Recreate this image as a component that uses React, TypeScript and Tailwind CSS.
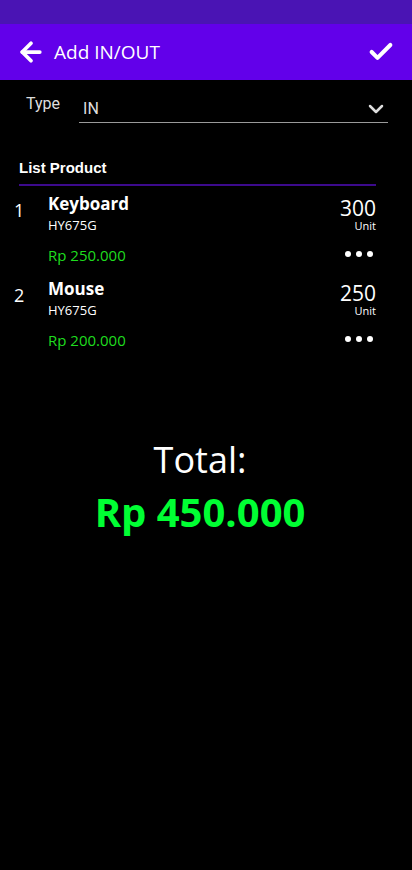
import { ArrowLeft, Check, ChevronDown } from "lucide-react";

const products = [
  { id: 1, name: "Keyboard", code: "HY675G", price: "Rp 250.000", qty: 300 },
  { id: 2, name: "Mouse", code: "HY675G", price: "Rp 200.000", qty: 250 },
];

export default function App() {
  return (
    <div className="w-[412px] h-[870px] bg-black text-white font-['Open_Sans',sans-serif]">
      <div className="h-[24px] bg-[#4a14b4]" />
      <div className="h-[56px] bg-[#6200ea] flex items-center pl-[16px] pr-[17px]">
        <ArrowLeft size={30} strokeWidth={3} />
        <span className="ml-[8px] text-[19px]">Add IN/OUT</span>
        <Check size={28} strokeWidth={3.5} className="ml-auto" />
      </div>

      <div className="flex items-end pl-[26px] pr-[24px] pt-[12px]">
        <span className="text-[16px] text-[#dddddd] font-['Roboto',sans-serif] mb-[7px]">Type</span>
        <div className="ml-[19px] flex-1 flex items-center border-b border-[#9a9a9a] pl-[4px] pr-[0px] h-[28px]">
          <span className="text-[16px] text-[#dddddd] font-['Roboto',sans-serif]">IN</span>
          <ChevronDown size={24} strokeWidth={2.5} className="ml-auto text-[#dddddd]" />
        </div>
      </div>

      <div className="pl-[19px] pr-[36px] mt-[34px]">
        <div className="text-[15px] font-bold font-['Liberation_Sans',sans-serif] pb-[4px] border-b-2 border-[#3c0a8c]">
          List Product
        </div>
      </div>

      <div className="mt-[6px]">
        {products.map((p) => (
          <div key={p.id} className="flex pl-[14px] pr-[36px] h-[85px]">
            <span className="w-[34px] text-[18px] pt-[5px]">{p.id}</span>
            <div className="flex-1 flex flex-col">
              <span className="text-[17px] font-bold leading-[24px]">{p.name}</span>
              <span className="text-[13px] leading-[18px]">{p.code}</span>
              <span className="text-[15px] text-[#1fdc1f] mt-[11px] leading-[20px]">{p.price}</span>
            </div>
            <div className="flex flex-col items-end">
              <span className="text-[21px] leading-[24px] mt-[4px]">{p.qty}</span>
              <span className="text-[11px] leading-[12px]">Unit</span>
              <div className="flex gap-[5px] mt-[19px] mr-[3px]">
                <span className="w-[6px] h-[6px] rounded-full bg-white" />
                <span className="w-[6px] h-[6px] rounded-full bg-white" />
                <span className="w-[6px] h-[6px] rounded-full bg-white" />
              </div>
            </div>
          </div>
        ))}
      </div>

      <div className="flex flex-col items-center mt-[74px] pr-[12px]">
        <span className="text-[36px] leading-[48px]">Total:</span>
        <span className="text-[40px] font-bold text-[#00ff33] leading-[56px]">Rp 450.000</span>
      </div>
    </div>
  );
}
